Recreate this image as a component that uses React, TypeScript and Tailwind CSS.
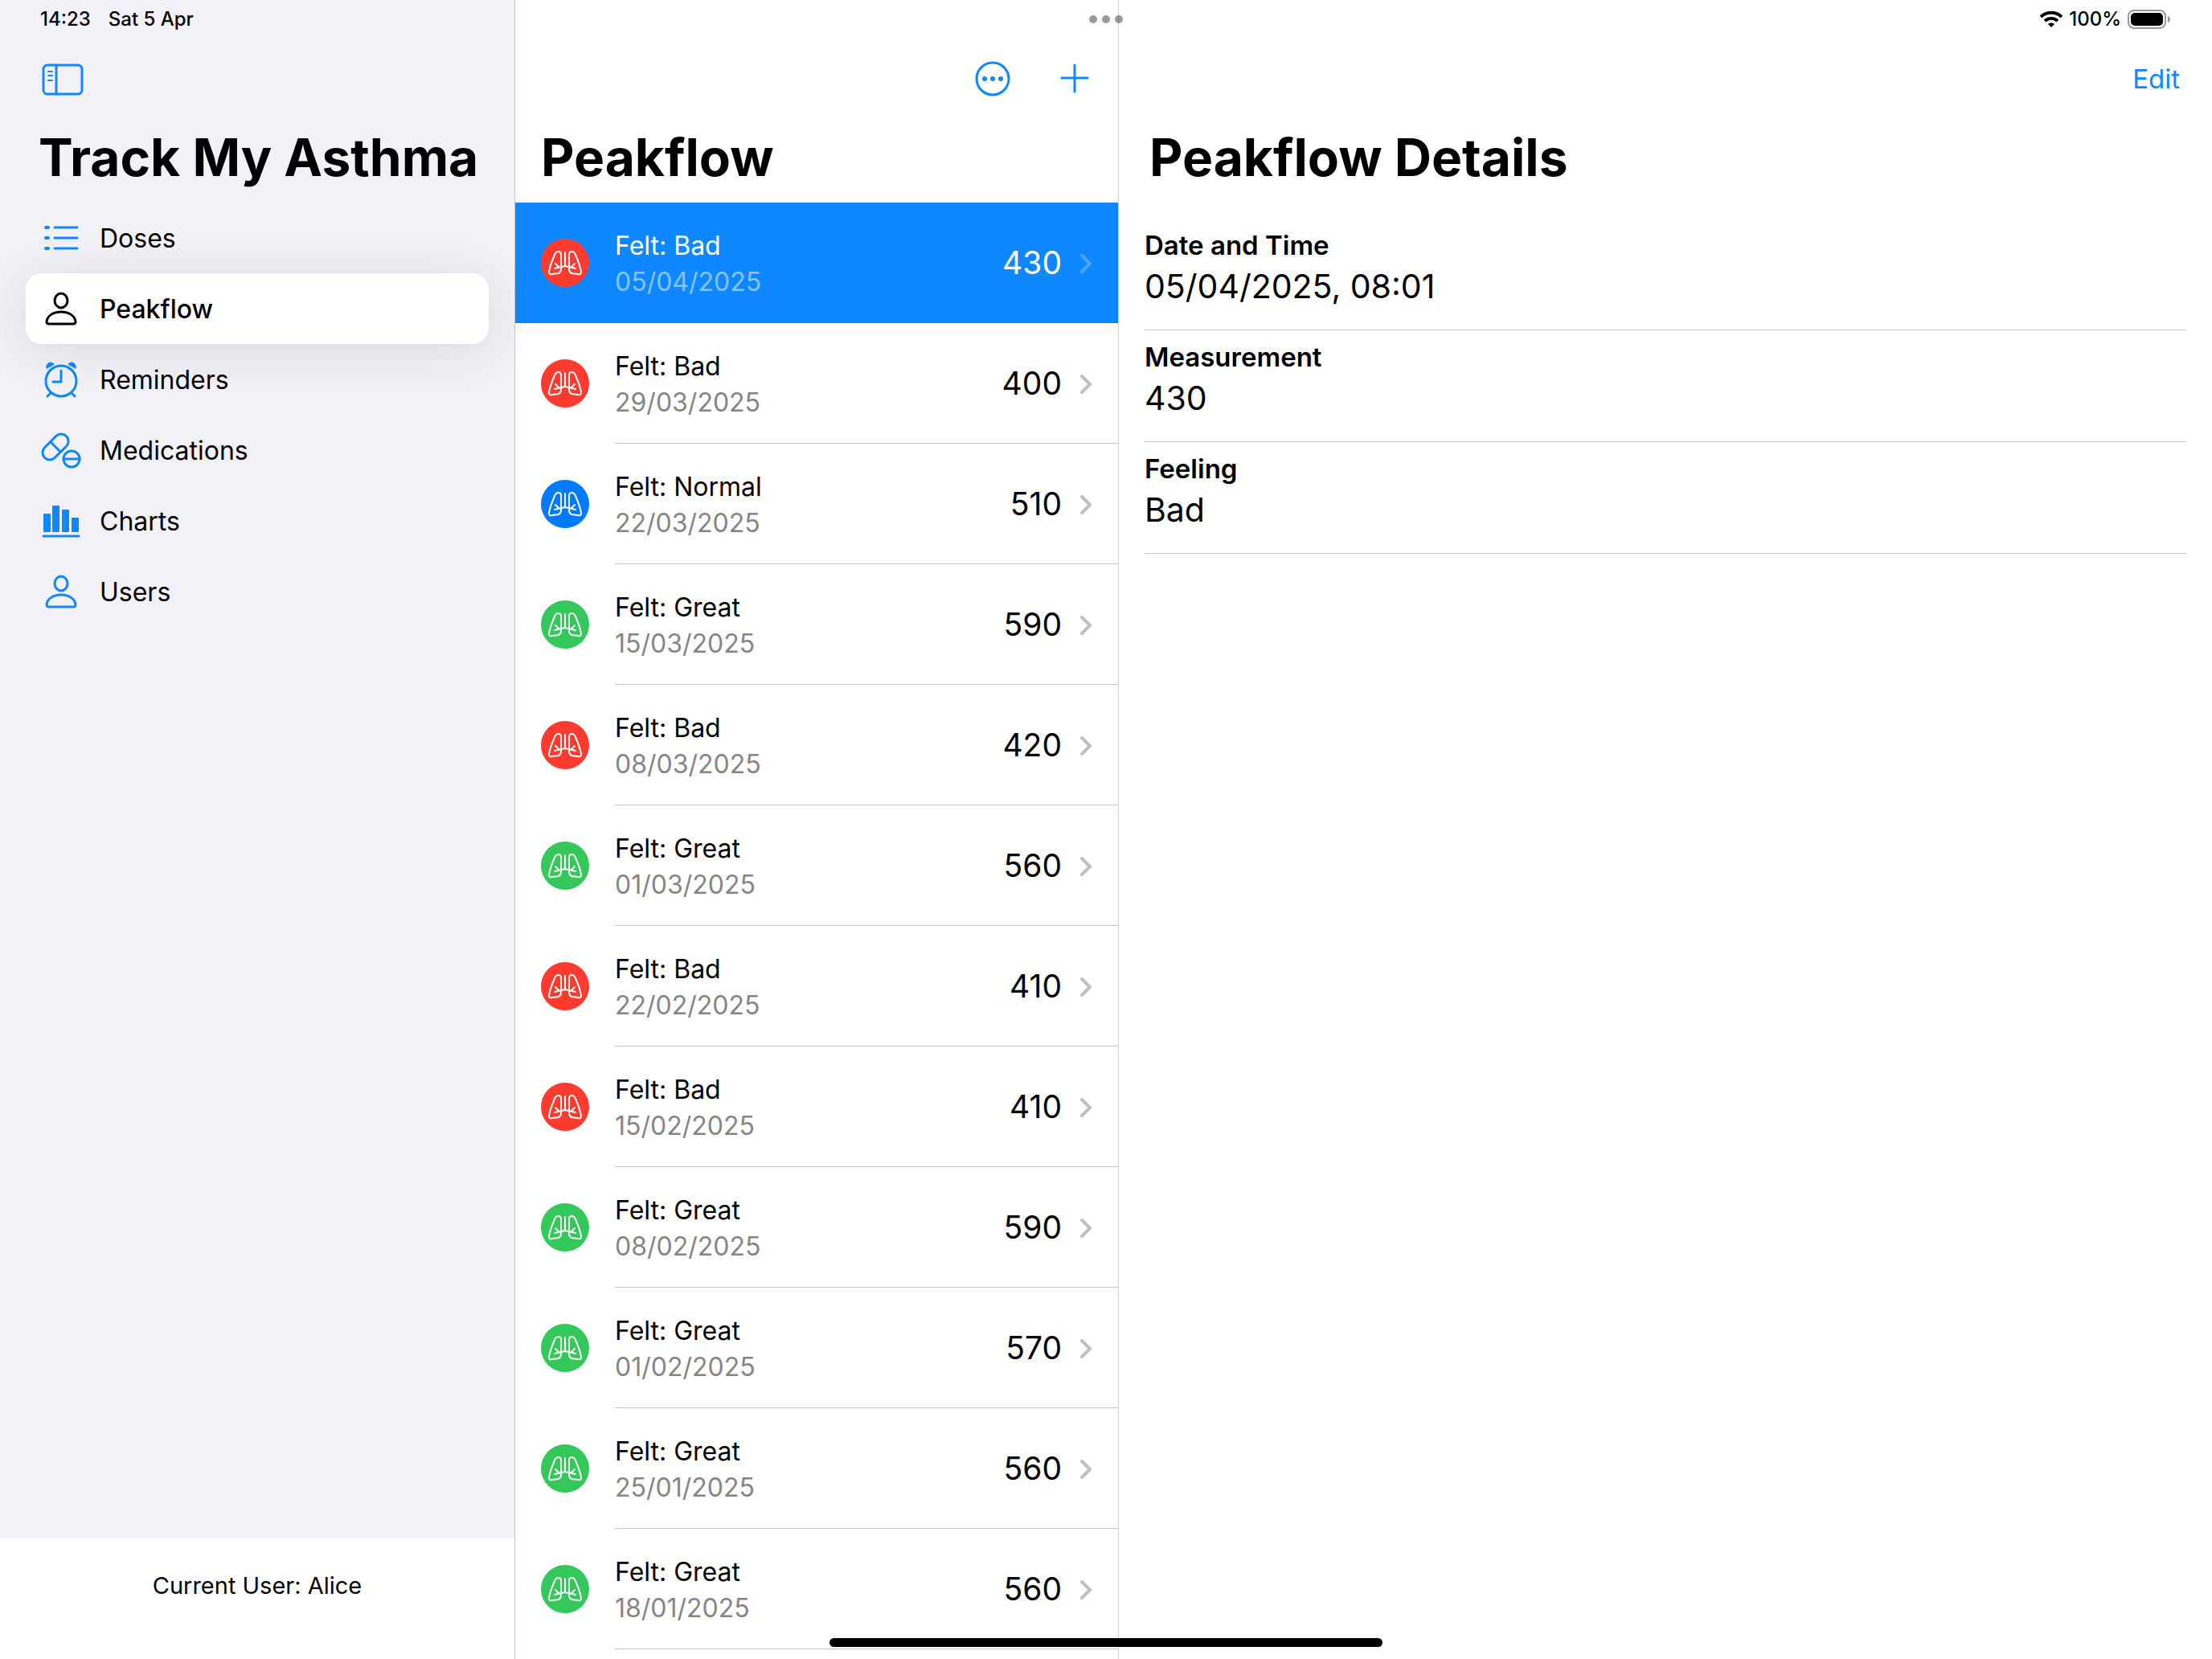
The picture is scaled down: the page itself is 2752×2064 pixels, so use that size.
import React, { useState } from 'react';

type Feeling = 'Bad' | 'Normal' | 'Great';

interface Reading {
  feeling: Feeling;
  date: string;
  value: number;
}

const readings: Reading[] = [
  { feeling: 'Bad', date: '05/04/2025', value: 430 },
  { feeling: 'Bad', date: '29/03/2025', value: 400 },
  { feeling: 'Normal', date: '22/03/2025', value: 510 },
  { feeling: 'Great', date: '15/03/2025', value: 590 },
  { feeling: 'Bad', date: '08/03/2025', value: 420 },
  { feeling: 'Great', date: '01/03/2025', value: 560 },
  { feeling: 'Bad', date: '22/02/2025', value: 410 },
  { feeling: 'Bad', date: '15/02/2025', value: 410 },
  { feeling: 'Great', date: '08/02/2025', value: 590 },
  { feeling: 'Great', date: '01/02/2025', value: 570 },
  { feeling: 'Great', date: '25/01/2025', value: 560 },
  { feeling: 'Great', date: '18/01/2025', value: 560 },
];

const feelingColors: Record<Feeling, string> = {
  Bad: 'bg-[#ff3b30]',
  Normal: 'bg-[#007aff]',
  Great: 'bg-[#34c759]',
};

const iconProps = {
  width: 56,
  height: 56,
  viewBox: '0 0 56 56',
  fill: 'none',
  stroke: 'currentColor',
  strokeWidth: 3,
  strokeLinecap: 'round' as const,
  strokeLinejoin: 'round' as const,
  'aria-hidden': true,
};

const ListIcon = () => (
  <svg {...iconProps}>
    <path d="M20 14h28M20 27h28M20 40h28" />
    <path d="M9 14h3M9 27h3M9 40h3" strokeWidth={4} />
  </svg>
);

const PersonIcon = () => (
  <svg {...iconProps}>
    <ellipse cx="28" cy="17" rx="8" ry="9" />
    <path d="M13 46h30c2 0 3-1 3-3-1-7-8-12-18-12s-17 5-18 12c0 2 1 3 3 3z" />
  </svg>
);

const AlarmIcon = () => (
  <svg {...iconProps}>
    <circle cx="28" cy="29" r="19" />
    <path d="M28 16v14H18M15 44l-4 4M41 44l4 4" />
    <path d="M10 13c-1-3 1-7 5-7 2 0 3 1 4 2zM46 13c1-3-1-7-5-7-2 0-3 1-4 2z" fill="currentColor" strokeWidth={1} />
  </svg>
);

const PillsIcon = () => (
  <svg {...iconProps}>
    <rect x="2" y="14" width="38" height="18" rx="9" transform="rotate(-45 21 23)" />
    <path d="M15 17l12 12" />
    <circle cx="41" cy="38" r="10" />
    <path d="M31 38h20" />
  </svg>
);

const ChartIcon = () => (
  <svg {...iconProps}>
    <g fill="currentColor" stroke="none">
      <rect x="6" y="18" width="9" height="23" rx="1" />
      <rect x="17" y="8" width="9" height="33" rx="1" />
      <rect x="29" y="13" width="9" height="28" rx="1" />
      <rect x="41" y="23" width="9" height="18" rx="1" />
    </g>
    <path d="M6 46h44" />
  </svg>
);

const LungsIcon = () => (
  <svg width={60} height={60} viewBox="0 0 60 60" fill="none" stroke="white" strokeWidth={2} strokeLinecap="round" strokeLinejoin="round" aria-hidden>
    <path d="M25 38V20c0-3-1-4-3-4s-4 1-5 4c-3 7-6 15-7 21 0 3 1 4 4 3l8-1c2-1 3-2 3-5" />
    <path d="M35 38V20c0-3 1-4 3-4s4 1 5 4c3 7 6 15 7 21 0 3-1 4-4 3l-8-1c-2-1-3-2-3-5" />
    <path d="M30 17v17M17 37l13-3 13 3M18 31l4 4M42 31l-4 4" />
  </svg>
);

const WifiIcon = () => (
  <svg width={28} height={20} viewBox="0 0 28 20" fill="none" stroke="currentColor" strokeWidth={4} aria-hidden>
    <path d="M1 7C8 0 20 0 27 7M6 12c5-4 11-4 16 0" />
    <path d="M14 20l-4-4c2-2 6-2 8 0z" fill="currentColor" stroke="none" />
  </svg>
);

const BatteryIcon = () => (
  <svg width={54} height={24} viewBox="0 0 54 24" aria-hidden>
    <rect x="1" y="1" width="46" height="22" rx="7" fill="none" stroke="#999" strokeWidth={2} />
    <rect x="4" y="4" width="40" height="16" rx="5" fill="black" />
    <path d="M50 8c4 1 4 7 0 8z" fill="#999" />
  </svg>
);

const navItems = [
  { label: 'Doses', icon: ListIcon },
  { label: 'Peakflow', icon: PersonIcon },
  { label: 'Reminders', icon: AlarmIcon },
  { label: 'Medications', icon: PillsIcon },
  { label: 'Charts', icon: ChartIcon },
  { label: 'Users', icon: PersonIcon },
];

const Sidebar: React.FC = () => {
  const [active, setActive] = useState('Peakflow');

  return (
    <aside className="flex flex-col bg-[#f2f1f7] border-r border-[#c6c6c8]">
      <div className="flex items-center gap-[22px] h-12 px-[50px] text-2xl font-medium">
        <span>14:23</span>
        <span>Sat 5 Apr</span>
      </div>
      <div className="flex items-center h-[100px] px-[50px]">
        <button aria-label="Toggle sidebar" className="text-[#0f87ff]">
          <svg width={56} height={44} viewBox="0 0 56 44" fill="none" stroke="currentColor" strokeWidth={3} strokeLinecap="round" aria-hidden>
            <rect x="4" y="5" width="48" height="36" rx="5" />
            <path d="M20 5v36" />
            <path d="M10 13h5M10 18h5M10 24h5" strokeWidth={2} />
          </svg>
        </button>
      </div>
      <h1 className="h-[104px] pl-12 text-[64px] leading-[96px] font-bold whitespace-nowrap">Track My Asthma</h1>

      <nav className="flex-1 px-8">
        {navItems.map(({ label, icon: Icon }) => (
          <button
            key={label}
            onClick={() => setActive(label)}
            className={`flex items-center gap-5 w-full h-[88px] pt-[2px] pl-4 rounded-[20px] text-[32px] ${
              active === label ? 'relative bg-white font-medium shadow-[0_8px_60px_rgba(0,0,0,0.1)]' : ''
            }`}
          >
            <span className={active === label ? 'text-black' : 'text-[#0f87ff]'}>
              <Icon />
            </span>
            {label}
          </button>
        ))}
      </nav>

      <footer className="flex items-center justify-center h-[150px] pb-8 bg-white text-[29px]">
        Current User: Alice
      </footer>
    </aside>
  );
};

interface ReadingListProps {
  selected: number;
  onSelect: (index: number) => void;
}

const ReadingList: React.FC<ReadingListProps> = ({ selected, onSelect }) => (
  <section className="flex flex-col min-h-0 overflow-hidden border-r border-[#d1d1d3]">
    <div className="flex items-center justify-end gap-14 h-[100px] mt-12 pr-8 shrink-0 text-[#0f87ff]">
      <button aria-label="More options">
        <svg width={48} height={48} viewBox="0 0 48 48" fill="none" stroke="currentColor" strokeWidth={3} aria-hidden>
          <circle cx="24" cy="24" r="20" />
          <g fill="currentColor" stroke="none">
            <circle cx="14" cy="24" r="3" />
            <circle cx="24" cy="24" r="3" />
            <circle cx="34" cy="24" r="3" />
          </g>
        </svg>
      </button>
      <button aria-label="Add reading">
        <svg width={44} height={44} viewBox="0 0 44 44" fill="none" stroke="currentColor" strokeWidth={3} strokeLinecap="round" aria-hidden>
          <path d="M22 5v33M6 21h32" />
        </svg>
      </button>
    </div>
    <h2 className="h-[104px] shrink-0 pl-8 text-[64px] leading-[96px] font-bold">Peakflow</h2>

    <ul>
      {readings.map((reading, index) => {
        const isSelected = index === selected;
        return (
          <li key={reading.date}>
            <button
              onClick={() => onSelect(index)}
              className={`flex w-full h-[150px] pl-8 text-left ${isSelected ? 'bg-[#0f87ff] text-white' : ''}`}
            >
              <span className={`self-center shrink-0 w-[60px] h-[60px] mr-8 rounded-full ${feelingColors[reading.feeling]}`}>
                <LungsIcon />
              </span>
              <span className={`flex flex-1 items-center h-full pt-[2px] pr-[30px] border-b ${isSelected ? 'border-transparent' : 'border-[#c6c6c8]'}`}>
                <span className="flex flex-col flex-1 text-[32px] leading-[45px]">
                  <span>Felt: {reading.feeling}</span>
                  <span className={isSelected ? 'text-white/50' : 'text-[#858585]'}>{reading.date}</span>
                </span>
                <span className="mr-5 text-[39px]">{reading.value}</span>
                <svg width={20} height={28} viewBox="0 0 20 28" fill="none" stroke="currentColor" strokeWidth={4} strokeLinecap="round" strokeLinejoin="round" className={isSelected ? 'text-white/25' : 'text-[#bfbfbf]'} aria-hidden>
                  <path d="M5 4l10 10L5 24" />
                </svg>
              </span>
            </button>
          </li>
        );
      })}
    </ul>
  </section>
);

const Details: React.FC<{ reading: Reading }> = ({ reading }) => {
  const fields = [
    { label: 'Date and Time', value: `${reading.date}, 08:01` },
    { label: 'Measurement', value: reading.value },
    { label: 'Feeling', value: reading.feeling },
  ];

  return (
    <main className="flex flex-col">
      <div className="flex items-center justify-end gap-2 h-12 pr-[51px] text-2xl font-medium">
        <WifiIcon />
        <span>100%</span>
        <BatteryIcon />
      </div>
      <div className="flex items-center justify-end h-[100px] pr-10">
        <button className="pt-[2px] text-[33px] text-[#0f87ff]">Edit</button>
      </div>
      <h2 className="h-[104px] pl-[38px] text-[64px] leading-[96px] font-bold">Peakflow Details</h2>

      <dl className="px-8 pt-5">
        {fields.map((field) => (
          <div key={field.label} className="h-[139px] pt-2 border-b border-[#c6c6c8]">
            <dt className="text-[33px] leading-[50px] font-semibold">{field.label}</dt>
            <dd className="text-[41px] leading-[52px]">{field.value}</dd>
          </div>
        ))}
      </dl>
    </main>
  );
};

const App: React.FC = () => {
  const [selected, setSelected] = useState(0);

  return (
    <div className="relative grid grid-cols-[641px_751px_minmax(0,1fr)] grid-rows-[minmax(0,1fr)] h-screen overflow-hidden bg-white text-black font-['Inter',sans-serif]">
      <Sidebar />
      <ReadingList selected={selected} onSelect={setSelected} />
      <Details reading={readings[selected]} />

      {/* Multitasking dots */}
      <div className="absolute top-[19px] inset-x-0 flex justify-center gap-[6px] pointer-events-none">
        <span className="w-[10px] h-[10px] rounded-full bg-black/40" />
        <span className="w-[10px] h-[10px] rounded-full bg-black/40" />
        <span className="w-[10px] h-[10px] rounded-full bg-black/40" />
      </div>

      {/* Home indicator */}
      <div className="absolute bottom-[15px] inset-x-0 flex justify-center pointer-events-none">
        <span className="w-1/4 h-[11px] rounded-full bg-black" />
      </div>
    </div>
  );
};

export default App;
